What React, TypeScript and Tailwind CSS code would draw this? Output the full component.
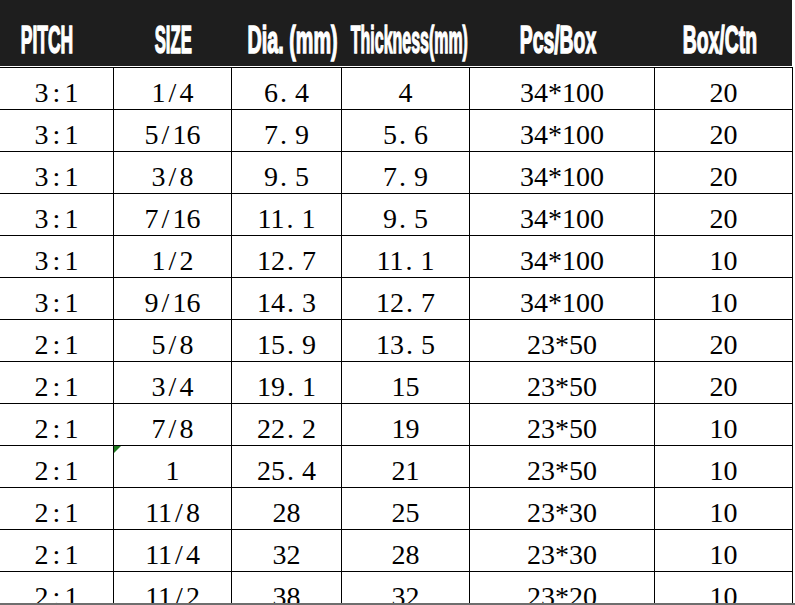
const headers = [
  { label: "PITCH", cls: "scale-x-[0.46] -translate-x-[10px]" },
  { label: "SIZE", cls: "scale-x-[0.44]" },
  { label: "Dia. (mm)", cls: "scale-x-[0.52] translate-x-[6px]" },
  { label: "Thickness(mm)", cls: "scale-x-[0.42] translate-x-[3px]" },
  { label: "Pcs/Box", cls: "scale-x-[0.51] -translate-x-[5px]" },
  { label: "Box/Ctn", cls: "scale-x-[0.51] -translate-x-[4px]" },
];

const rows = [
  ["3:1", "1/4", "6.4", "4", "34*100", "20"],
  ["3:1", "5/16", "7.9", "5.6", "34*100", "20"],
  ["3:1", "3/8", "9.5", "7.9", "34*100", "20"],
  ["3:1", "7/16", "11.1", "9.5", "34*100", "20"],
  ["3:1", "1/2", "12.7", "11.1", "34*100", "10"],
  ["3:1", "9/16", "14.3", "12.7", "34*100", "10"],
  ["2:1", "5/8", "15.9", "13.5", "23*50", "20"],
  ["2:1", "3/4", "19.1", "15", "23*50", "20"],
  ["2:1", "7/8", "22.2", "19", "23*50", "10"],
  ["2:1", "1", "25.4", "21", "23*50", "10"],
  ["2:1", "11/8", "28", "25", "23*30", "10"],
  ["2:1", "11/4", "32", "28", "23*30", "10"],
  ["2:1", "11/2", "38", "32", "23*20", "10"],
];

// wide punctuation, like the sheet's font
const fmt = (s: string) =>
  s.split("").map((ch, i) => {
    if (ch === ":") return <span key={i} className="px-1">:</span>;
    if (ch === ".") return <span key={i} className="pl-[2px] pr-[8px]">.</span>;
    if (ch === "/") return <span key={i} className="px-[3px]">/</span>;
    return <span key={i}>{ch}</span>;
  });

const App = () => {
  return (
    <div className="relative w-[795px] h-[605px] overflow-hidden bg-white">
      <div className="w-[793px]">
        <div className="grid grid-cols-[114px_118px_110px_128px_185px_138px] h-[66px] w-[792px] bg-[#1e1e1e] text-white [font-family:Liberation_Sans,Arial,sans-serif] font-bold text-[38px] leading-none">
          {headers.map((h) => (
            <div key={h.label} className="flex justify-center pt-[21px] whitespace-nowrap">
              <span className={`inline-block [-webkit-text-stroke:1.5px_white] ${h.cls}`}>
                {h.label}
              </span>
            </div>
          ))}
        </div>
        <div className="mt-px [font-family:Liberation_Serif,Times_New_Roman,serif] text-[28px] text-black">
          {rows.map((r, ri) => (
            <div
              key={ri}
              className="grid grid-cols-[114px_118px_110px_128px_185px_138px] h-[42px] border-t border-black"
            >
              {r.map((c, ci) => (
                <div
                  key={ci}
                  className="relative border-r border-black text-center leading-[33px] pt-[8px] whitespace-nowrap"
                >
                  {ri === 9 && ci === 1 && (
                    <span className="absolute left-0 top-0 w-0 h-0 border-t-[7px] border-r-[7px] border-t-[#1f7a1f] border-r-transparent" />
                  )}
                  {fmt(c)}
                </div>
              ))}
            </div>
          ))}
        </div>
      </div>
      <div className="absolute left-0 right-0 top-[603px] h-[2px] bg-[#6e6e6e]" />
    </div>
  );
};

export default App;
